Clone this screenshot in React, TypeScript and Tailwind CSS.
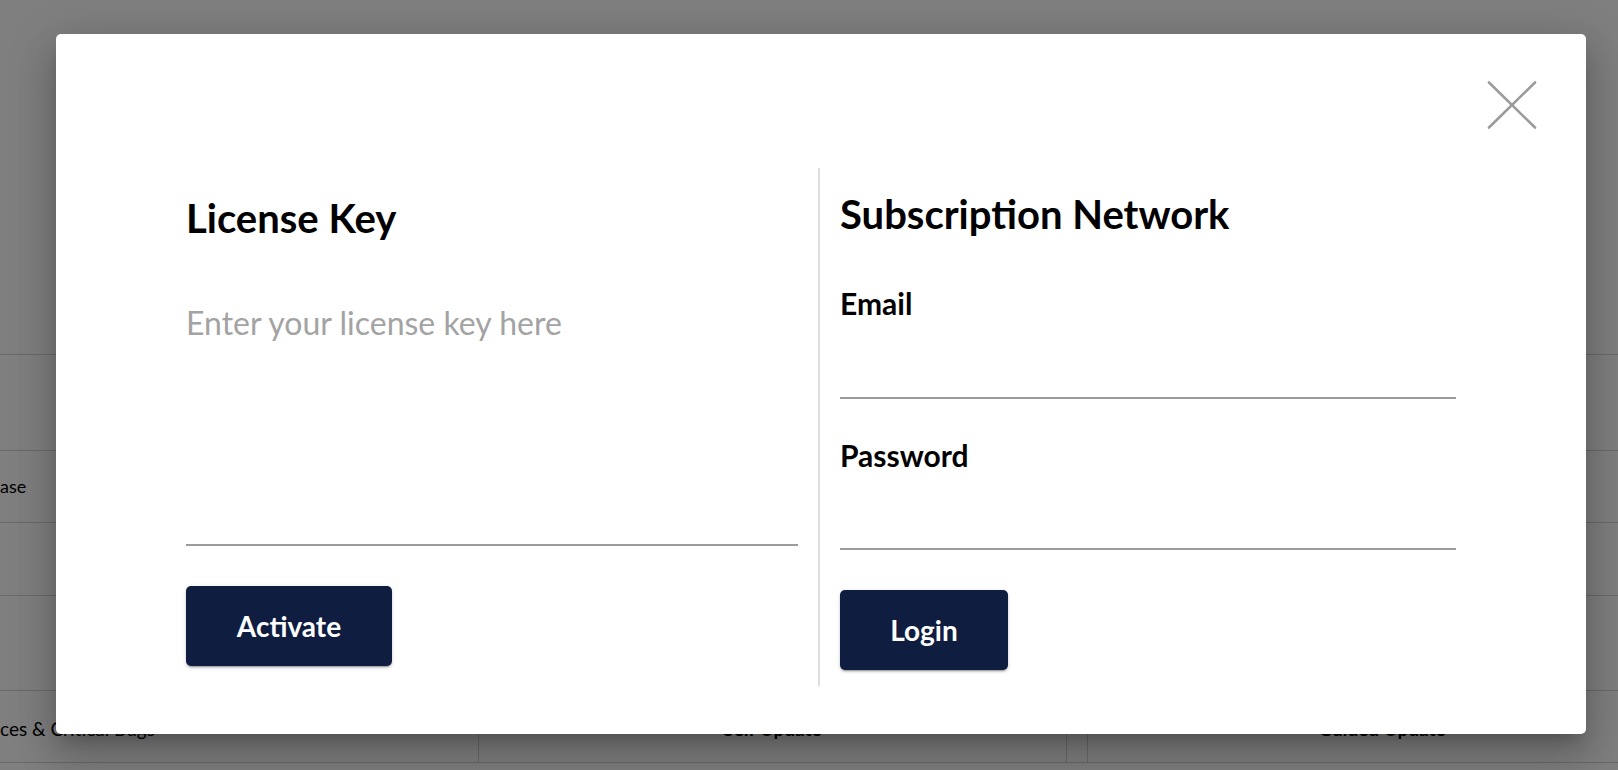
import React from "react";

function CloseIcon() {
  return (
    <svg width="50" height="48" viewBox="0 0 50 48" fill="none">
      <line x1="2" y1="1.5" x2="48" y2="46.5" stroke="#9b9b9b" strokeWidth="2.6" strokeLinecap="round" />
      <line x1="48" y1="1.5" x2="2" y2="46.5" stroke="#9b9b9b" strokeWidth="2.6" strokeLinecap="round" />
    </svg>
  );
}

export default function App() {
  return (
    <div className="relative h-[770px] w-full overflow-hidden bg-white font-['Lato',sans-serif] text-black">
      {/* page behind the dialog */}
      <div className="flex flex-col">
        <div className="h-[355px] border-b border-[#d2d2d2]" />
        <div className="h-[96px] border-b border-[#d2d2d2]" />
        <div className="flex h-[72px] items-center border-b border-[#d2d2d2] text-[18px]">
          <span>ase</span>
        </div>
        <div className="h-[73px] border-b border-[#d2d2d2]" />
        <div className="h-[95px] border-b border-[#d2d2d2]" />
        <div className="flex h-[72px] border-b border-[#d2d2d2] text-[19px]">
          <div className="flex w-[479px] shrink-0 items-center border-r border-[#d2d2d2] pt-[6px]">
            <span>ces &amp; Critical Bugs</span>
          </div>
          <div className="flex w-[588px] shrink-0 items-center justify-center border-r border-[#d2d2d2] pt-[6px] font-bold">
            Self Update
          </div>
          <div className="w-[21px] shrink-0 border-r border-[#d2d2d2]" />
          <div className="flex w-[588px] shrink-0 items-center justify-center pt-[6px] font-bold">
            Guided Update
          </div>
        </div>
        <div className="h-[60px]" />
      </div>

      {/* backdrop */}
      <div className="absolute inset-0 bg-black/50" />

      {/* dialog */}
      <div className="absolute left-[56px] top-[34px] h-[700px] w-[1530px] rounded-[5px] bg-white px-[130px] pt-[134px] shadow-[0px_11px_15px_-7px_rgba(0,0,0,0.2),0px_24px_38px_3px_rgba(0,0,0,0.14),0px_9px_46px_8px_rgba(0,0,0,0.12)]">
        <button className="absolute right-[49px] top-[47px]" aria-label="Close">
          <CloseIcon />
        </button>

        <div className="grid grid-cols-[612px_2px_616px] gap-x-[20px]">
          {/* License key */}
          <div className="flex flex-col items-start pt-[26px]">
            <h2 className="text-[40px] font-bold leading-[48px]">License Key</h2>
            <textarea
              className="mt-[62px] block h-[242px] w-full resize-none border-b-2 border-[#9b9b9b] bg-transparent text-[32px] leading-[38px] outline-none placeholder:text-[#a3a3a3]"
              placeholder="Enter your license key here"
            />
            <button className="mt-[40px] h-[80px] w-[206px] rounded-[5px] bg-[#0e1d40] text-[28px] font-bold text-white shadow-[0px_3px_1px_-2px_rgba(0,0,0,0.2),0px_2px_2px_0px_rgba(0,0,0,0.14),0px_1px_5px_0px_rgba(0,0,0,0.12)]">
              Activate
            </button>
          </div>

          {/* divider */}
          <div className="bg-[#dedede]" />

          {/* Subscription network */}
          <div className="flex flex-col items-start pb-[16px] pt-[22px]">
            <h2 className="text-[40px] font-bold leading-[48px]">Subscription Network</h2>
            <label className="mt-[47px] text-[30px] font-bold leading-[36px]">Email</label>
            <input
              type="email"
              className="block h-[78px] w-full border-b-2 border-[#9b9b9b] bg-transparent text-[28px] outline-none"
            />
            <label className="mt-[38px] text-[30px] font-bold leading-[36px]">Password</label>
            <input
              type="password"
              className="block h-[77px] w-full border-b-2 border-[#9b9b9b] bg-transparent text-[28px] outline-none"
            />
            <button className="mt-[40px] h-[80px] w-[168px] rounded-[5px] bg-[#0e1d40] text-[28px] font-bold text-white shadow-[0px_3px_1px_-2px_rgba(0,0,0,0.2),0px_2px_2px_0px_rgba(0,0,0,0.14),0px_1px_5px_0px_rgba(0,0,0,0.12)]">
              Login
            </button>
          </div>
        </div>
      </div>
    </div>
  );
}
